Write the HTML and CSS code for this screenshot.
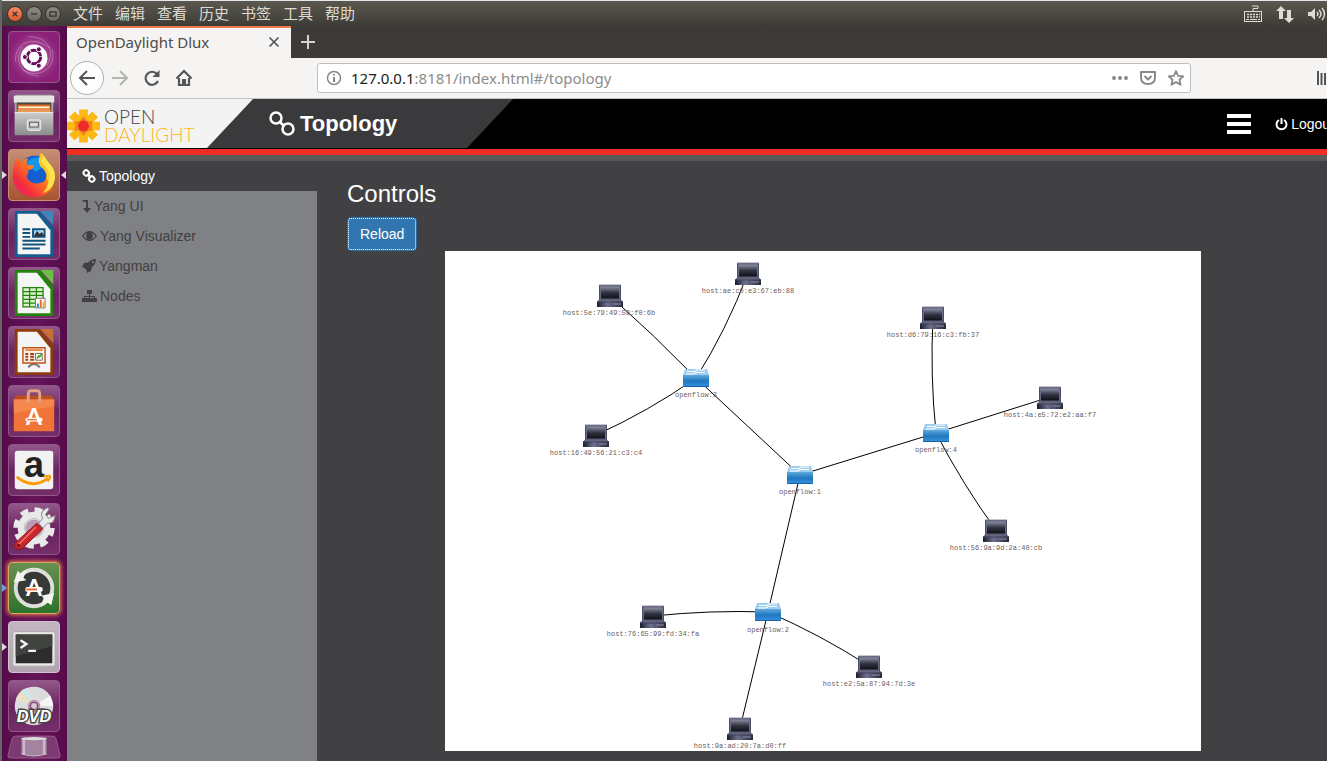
FILE: index.html
```html
<!DOCTYPE html>
<html lang="zh-CN">
<head>
<meta charset="utf-8">
<title>OpenDaylight Dlux</title>
<link rel="stylesheet" href="styles.css">
</head>
<body>
<div class="desktop">
  <header class="menubar">
    <div class="window-buttons">
      <button class="win win-close" aria-label="关闭"><svg viewBox="0 0 16 16"><path d="M5.500 5.500l5 5M10.500 5.500l-5 5"/></svg></button>
      <button class="win" aria-label="最小化"><svg viewBox="0 0 16 16"><path d="M4.500 8h7"/></svg></button>
      <button class="win" aria-label="还原"><svg viewBox="0 0 16 16"><path d="M4.500 5.500h7v5h-7z"/></svg></button>
    </div>
    <nav class="menus">
      <button>文件</button><button>编辑</button><button>查看</button><button>历史</button><button>书签</button><button>工具</button><button>帮助</button>
    </nav>
    <div class="indicators">
      <svg width="20" height="20" viewBox="0 0 20 20" fill="none" stroke="#dfdbd2"><rect x="1.500" y="7.500" width="17" height="10"/><path d="M10 7V4.500h5V2H9"/><path d="M4 10.500h13M4 13h13" stroke-width="1.500" stroke-dasharray="2 1"/><path d="M3 15.500h3M7 15.500h7M15 15.500h2"/></svg>
      <svg width="20" height="20" viewBox="0 0 20 20" fill="#dfdbd2"><path d="M6 2l5 5H8v8H4V7H1zM14 19l-5-5h3V6h4v8h3z"/></svg>
      <svg width="20" height="20" viewBox="0 0 20 20" fill="none" stroke="#dfdbd2" stroke-width="1.500"><path d="M1 8h3l4-4v12l-4-4H1z" fill="#dfdbd2" stroke="none"/><path d="M10 8q2 2 0 4M12 6q4 4 0 8M15 4q5 6 0 12"/></svg>
    </div>
  </header>

  <div class="workspace">
    <nav class="launcher" aria-label="启动器">
      <button class="tile tile-dash" aria-label="Dash"><svg viewBox="0 0 52 52"><g fill="none" stroke="#fff" opacity=".3"><path d="M7 31C5 10 26 3 43 17M20 5c20-1 29 15 19 30M45 18c5 20-15 32-31 21M31 46C14 45 4 30 14 15"/></g><circle cx="26" cy="27" r="14" fill="#fff"/><circle cx="26" cy="26" r="7" fill="none" stroke="#650d59" stroke-width="3" stroke-dasharray="13.600 1.060"/><g fill="#650d59" stroke="#fff"><circle cx="16.500" cy="26" r="2.600"/><circle cx="31" cy="18" r="2.600"/><circle cx="31" cy="35" r="2.600"/></g></svg></button>
      <button class="tile" aria-label="文件"><svg viewBox="0 0 52 52"><path d="M6 6q0-2 2-2h36q2 0 2 2v38H6z" fill="#aaa"/><path d="M5 5h42v7H5z" fill="#e5e5e3"/><path d="M8 12h36v12H8z" fill="#494946"/><path d="M9 14h34v8H9z" fill="#da6d27"/><path d="M10 16h32v2H10z" fill="#fff0cc"/><path d="M9 19h34v3H9z" fill="#eb9a59"/><path d="M6 22h40v24H6z" fill="url(#metal)"/><path d="M6 22.500h40" stroke="#eee"/><rect x="19" y="30" width="14" height="11" rx="2" fill="#c8c8c8" stroke="#eee"/><rect x="21.500" y="32.500" width="9" height="5" fill="#ddd" stroke="#555"/></svg></button>
      <button class="tile tile-firefox pinned focused" aria-label="Firefox"><svg viewBox="0 0 52 52"><circle cx="27" cy="25" r="19" fill="#155ed0"/><path d="M17 14q7-8 17-6l-3 4 5 5-8 6z" fill="#1796e8"/><path d="M5 18c1-4 1-7 3-10l4 5q5-5 8-4-3 4-1 7 3-1 7 0-1 4-6 5v3q-4 4 1 8 6 5 15 1 5-4 3-13-1-5-6-8l-1-9q7 5 7 12 7 6 8 16c0 11-9 18-20 18C12 49 3 38 4 25z" fill="url(#fire)"/><path d="M34 3q5 7 10 13 6 8 3 17-3 9-12 12 6-6 6-14 0-10-6-16-5-4-1-12z" fill="#ffe348"/><path d="M34 5q-4 8 2 13 6 6 4 13" fill="none" stroke="#ffc52a" stroke-width="3"/></svg></button>
      <button class="tile" aria-label="LibreOffice Writer"><svg viewBox="0 0 52 52"><path d="M7 2h25l14 17v29q0 2-2 2H8q-2 0-2-2V4q0-2 1-2z" fill="#135e91"/><path d="M9 5h20l14 17v25H9z" fill="#f5f5f5"/><path d="M33 2h13v15z" fill="#3f87ba"/><path d="M14 21h8M14 25h8M14 29h8M14 33h24M14 37h24M14 41h18" stroke="#10527f" stroke-width="2"/><path d="M25 21h12v8H25z" fill="#a6d6f3" stroke="#10527f" stroke-width="2"/><path d="M26 28l3-5 3 3 2-2 3 4z" fill="#333"/><circle cx="34" cy="23" r="1" fill="#ee4"/></svg></button>
      <button class="tile" aria-label="LibreOffice Calc"><svg viewBox="0 0 52 52"><path d="M7 2h25l14 17v29q0 2-2 2H8q-2 0-2-2V4q0-2 1-2z" fill="#24830d"/><path d="M9 5h20l14 17v25H9z" fill="#f5f5f5"/><path d="M33 2h13v15z" fill="#6cc047"/><path d="M14.500 20.500h21v20h-21zM14 24.500h22M14 28.500h22M14 32.500h22M14 36.500h22M21.500 20v21M28.500 20v21" fill="#d9f0cd" stroke="#24830d" stroke-width="1.300"/><path d="M27.500 31.500h10v10h-10z" fill="#fff" stroke="#777"/><path d="M29 37h2v4h-2z" fill="#1688d6"/><path d="M32 33h2v8h-2z" fill="#ee6a20"/><path d="M35 35h2v6h-2z" fill="#f0b321"/></svg></button>
      <button class="tile" aria-label="LibreOffice Impress"><svg viewBox="0 0 52 52"><path d="M7 2h25l14 17v29q0 2-2 2H8q-2 0-2-2V4q0-2 1-2z" fill="#8e3b0b"/><path d="M9 5h20l14 17v25H9z" fill="#f5f5f5"/><path d="M33 2h13v15z" fill="#c57137"/><path d="M26 38v-3M20 42q6-7 12 0" stroke="#777" stroke-width="2" fill="none"/><path d="M14.500 21.500h23v16h-23z" fill="#fff4e9" stroke="#c45217" stroke-width="1.500"/><path d="M17 24h18" stroke="#e98a4d" stroke-width="2"/><path d="M17 28h3M17 31h3M17 34h3M22 28h4M22 31h4M22 34h4" stroke="#a44319" stroke-width="2"/><path d="M27.500 27.500h7v7h-7z" fill="#fff" stroke="#666"/><path d="M29 33l2-3 1 1 2-3" fill="none" stroke="#34a01e" stroke-width="1.500"/></svg></button>
      <button class="tile" aria-label="Ubuntu 软件"><svg viewBox="0 0 52 52"><path d="M7 10h38l2 5H5z" fill="#b94e22"/><path d="M5 14h42v33H5z" fill="#f07437"/><path d="M5 14h42v7L5 28z" fill="#f5874e"/><path d="M20 17V9q0-4 3-4h6q3 0 3 4v8" fill="none" stroke="#e5a184" stroke-width="3"/><text x="26" y="41" class="glyph glyph-app">A</text><rect x="17" y="33" width="18" height="4" rx="2" fill="#fff"/><path d="M19 35h10" stroke="#f07437" stroke-width="1.500"/></svg></button>
      <button class="tile" aria-label="Amazon"><svg viewBox="0 0 52 52"><rect x="6" y="6" width="40" height="40" rx="3" fill="#f2f2f2"/><text x="26" y="33" class="glyph glyph-amazon">a</text><path d="M9 34q16 12 31 1" fill="none" stroke="#f90" stroke-width="3" stroke-linecap="round"/><path d="M36 33q7-2 7 0t-3 5" fill="none" stroke="#f90" stroke-width="2"/></svg></button>
      <button class="tile" aria-label="系统设置"><svg viewBox="0 0 52 52"><circle cx="26" cy="25" r="18.500" fill="none" stroke="#e9e9e9" stroke-width="6" stroke-dasharray="8 6.530"/><circle cx="26" cy="25" r="13" fill="#b99bb5" stroke="#e9e9e9" stroke-width="8"/><circle cx="26" cy="25" r="10" fill="none" stroke="#bbb"/><path d="M31 20l4-5q-4-7 5-11l2 1-4 6 3 4 7-3q-1 9-8 8l-5 5z" fill="#e8eaeb" stroke="#888"/><path d="M29 20l6 6L14 46q-5 3-8-2-1-3 1-4z" fill="#c9272b" stroke="#8e1518"/><path d="M28 24L10 42" stroke="#eb6965" stroke-width="2"/><circle cx="10" cy="43" r="1.500" fill="#631014"/></svg></button>
      <button class="tile tile-updater pinned-outline" aria-label="软件更新器"><svg viewBox="0 0 52 52"><circle cx="26" cy="26" r="18" fill="#373936"/><circle cx="26" cy="26" r="19" fill="none" stroke="#dededb" stroke-width="4"/><path d="M5 20L9 8l3 3 7-4-4 8 3 3zM47 31l-3 13-4-3-7 3 3-7-2-3z" fill="#f3f3f0"/><text x="26" y="34" class="glyph glyph-app">A</text><rect x="17" y="25" width="18" height="5" rx="2" fill="#fff"/><path d="M18 27.500h11" stroke="#eb682e" stroke-width="2"/></svg></button>
      <button class="tile tile-terminal pinned" aria-label="终端"><svg viewBox="0 0 52 52"><rect x="4" y="10" width="44" height="36" rx="2" fill="#e6e6e3" stroke="#aaa"/><path d="M7 13h38v30H7z" fill="#2c2d2c"/><path d="M7 13h38v12L7 36z" fill="#414341"/><path d="M12 19l6 4-6 4M20 30h8" fill="none" stroke="#f3f3f3" stroke-width="2.500"/></svg></button>
      <button class="tile" aria-label="DVD"><svg viewBox="0 0 52 52"><circle cx="26" cy="26" r="20" fill="#dcdcdf"/><path d="M26 26L7 19q3-8 9-11z" fill="#e9e0c5"/><path d="M26 26L13 10l6-3z" fill="#c9e9e4"/><path d="M26 26l17-11 3 11z" fill="#f5f5f5"/><circle cx="26" cy="26" r="5.500" fill="#854879" stroke="#b796b0" stroke-width="2"/><circle cx="26" cy="26" r="3" fill="#d9c9d5"/><text x="26" y="43" class="glyph glyph-dvd">DVD</text></svg></button>
      <button class="tile-folded" aria-label="设备"><svg viewBox="0 0 64 27"><path d="M10 0h44q3 0 4 3l5 20q0 3-3 3H4q-3 0-3-3L6 3q1-3 4-3z" fill="#7b3a70" stroke="#9b6592"/><path d="M17 2v19q15 5 30 0V2z" fill="#a483a0"/><path d="M20 4v18M44 4v18" stroke="#cbb8c9" stroke-width="3"/><ellipse cx="32" cy="3" rx="15" ry="2" fill="#ddd"/><path d="M17 21q15 5 30 0" fill="none" stroke="#d3c7d2"/></svg></button>
    </nav>

    <div class="browser">
      <div class="tabs">
        <div class="tab"><span>OpenDaylight Dlux</span><button aria-label="关闭标签页"><svg width="12" height="12" viewBox="0 0 12 12"><path d="M1.500 1.500l9 9M10.500 1.500l-9 9" stroke="#555" stroke-width="1.700"/></svg></button></div>
        <button class="new-tab" aria-label="新标签页"><svg width="14" height="14" viewBox="0 0 14 14"><path d="M7 0v14M0 7h14" stroke="#d5d3cd" stroke-width="2"/></svg></button>
      </div>
      <div class="toolbar">
        <button class="back" aria-label="后退"><svg viewBox="0 0 18 18"><path d="M17 9H2M9 2L2 9l7 7"/></svg></button>
        <button class="tool tool-off" aria-label="前进"><svg viewBox="0 0 18 18"><path d="M1 9h15M9 2l7 7-7 7"/></svg></button>
        <button class="tool" aria-label="重新载入"><svg viewBox="0 0 18 18"><path d="M15 12a6.500 6.500 0 1 1-1-7" stroke-width="2.200"/><path d="M16.500 1v7h-7z" fill="#555" stroke="none"/></svg></button>
        <button class="tool" aria-label="主页"><svg viewBox="0 0 18 18"><path d="M1.500 9.500L9 2l7.500 7.500M4 9v7h10V9" stroke-width="2.200"/><path d="M7 10h4v6H7z" fill="#555" stroke="none"/></svg></button>
        <div class="address">
          <svg viewBox="0 0 18 18" class="muted"><circle cx="9" cy="9" r="6.500"/><path d="M9 8v5M9 5v1.500" stroke-width="2"/></svg>
          <label class="url"><input type="text" aria-label="地址" value="127.0.0.1:8181/index.html#/topology"><span aria-hidden="true"><b>127.0.0.1</b>:8181/index.html#/topology</span></label>
          <button aria-label="更多"><svg viewBox="0 0 18 18" class="muted"><g fill="#888" stroke="none"><circle cx="3" cy="9" r="2"/><circle cx="9" cy="9" r="2"/><circle cx="15" cy="9" r="2"/></g></svg></button>
          <button aria-label="Pocket"><svg viewBox="0 0 18 18" class="muted"><path d="M2 3h14v5q0 7-7 7T2 8zM5.500 7L9 10.500 12.500 7" stroke-width="2" stroke-linejoin="round"/></svg></button>
          <button aria-label="收藏"><svg viewBox="0 0 18 18" class="muted"><path d="M9 2l2.100 4.800 5.200.5-3.900 3.400 1.200 5.100L9 13.100l-4.600 2.700 1.200-5.100-3.900-3.400 5.200-.5z" stroke-width="1.800" stroke-linejoin="round"/></svg></button>
        </div>
        <button class="tool library" aria-label="书架"><svg viewBox="0 0 18 18"><path d="M2 2v14M5.500 4v12M9 4v12M12 4l4 12"/></svg></button>
      </div>

      <div class="page">
        <header class="banner">
          <div class="band">
            <a class="brand" href="#"><svg width="33" height="34" viewBox="0 0 34 34"><g fill="#fdb813"><path d="M12.500 0h9v34h-9z"/><path d="M0 12.500h34v9H0z"/><path d="M2 8l6-6 24 24-6 6z"/><path d="M26 2l6 6L8 32l-6-6z"/></g><path d="M17 7l4.500 5h5l-1 5 1 5h-5L17 27l-4.500-5h-5l1-5-1-5h5z" fill="#f58220"/><path d="M17 11l4 2 2 4-2 4-4 2-4-2-2-4 2-4z" fill="#ee2d24"/></svg><span class="brand-name"><span>OPEN</span><span class="gold">DAYLIGHT</span></span></a>
            <h1><svg width="26" height="26" viewBox="0 0 26 26" fill="none" stroke="#fff" stroke-width="2.500"><circle cx="7" cy="7" r="5.500"/><circle cx="19" cy="18" r="5.500"/><path d="M11 11l4 4"/></svg>Topology</h1>
          </div>
          <div class="account">
            <button class="burger" aria-label="Menu"><i></i><i></i><i></i></button>
            <a href="#"><svg width="13" height="14" viewBox="0 0 13 14" fill="none" stroke="#fff" stroke-width="2"><path d="M4 3a5 5 0 1 0 5 0M6.500 1v6"/></svg>Logout</a>
          </div>
        </header>
        <div class="columns">
          <nav class="sidebar">
            <a class="active" href="#"><svg width="14" height="14" viewBox="0 0 14 14" class="line"><rect x="1.500" y="1.500" width="5.500" height="5" rx="2.300" transform="rotate(45 4.250 4)"/><rect x="7" y="7.500" width="5.500" height="5" rx="2.300" transform="rotate(45 9.750 10)"/><path d="M5 5l4 4"/></svg>Topology</a>
            <a href="#"><svg width="9" height="14" viewBox="0 0 9 14"><path d="M0 1h6v8h3l-4 5-4-5h3V3H2z"/></svg>Yang UI</a>
            <a href="#"><svg width="15" height="14" viewBox="0 0 15 14"><path fill-rule="evenodd" d="M0 7q7.500-10 15 0-7.500 10-15 0zm1.500 0q6 7.500 12 0-2-2.500-4-3 2 2 1 5-1 2-3 2t-3-2q-1-3 1-5-2 .5-4 3z"/><circle cx="7.500" cy="6.500" r="2.500"/></svg>Yang Visualizer</a>
            <a href="#"><svg width="14" height="14" viewBox="0 0 14 14"><path fill-rule="evenodd" d="M14 0q0 5-4 8l-1 4-4 2-.5-3-2-2L0 8l2-4 4-.5Q9 0 14 0zm-3 2a1 1 0 1 0 .1 0z"/></svg>Yangman</a>
            <a href="#"><svg width="15" height="14" viewBox="0 0 15 14"><path d="M5 1h5v4H8v2h5v2h2v4h-5V9h2V8H8v1h2v4H5V9h2V8H3v1h2v4H0V9h2V7h5V5H5z"/></svg>Nodes</a>
          </nav>
          <main class="content">
            <h3>Controls</h3>
            <button class="reload">Reload</button>
            <svg class="graph" viewBox="0 0 756 500" role="img" aria-label="Topology">
              <defs>
                <linearGradient id="metal" x2="0" y2="1"><stop stop-color="#ccc"/><stop offset="1" stop-color="#8c8c8c"/></linearGradient>
                <linearGradient id="fire" x1="1" x2="0" y2="1"><stop stop-color="#ffd83a"/><stop offset=".45" stop-color="#ff7a20"/><stop offset=".75" stop-color="#f5293f"/><stop offset="1" stop-color="#e42486"/></linearGradient>
                <linearGradient id="screen" x2="0" y2="1"><stop stop-color="#8d90a5"/><stop offset=".5" stop-color="#30323f"/><stop offset="1" stop-color="#0d0e15"/></linearGradient>
                <linearGradient id="base" x2="1"><stop stop-color="#191a2b"/><stop offset=".4" stop-color="#6e7090"/><stop offset="1" stop-color="#272839"/></linearGradient>
                <linearGradient id="front" x2="0" y2="1"><stop stop-color="#62a9dc"/><stop offset=".5" stop-color="#1e78bf"/><stop offset="1" stop-color="#3a92dd"/></linearGradient>
                <symbol id="host" viewBox="0 0 26 23"><path d="M2 1h22v15H2z" fill="#4b4d6b"/><path d="M2 1h22" stroke="#8b8da3"/><path d="M3.500 2.500h19v12.500h-19z" fill="url(#screen)" stroke="#74768f" stroke-width=".8"/><path d="M1.500 16h23l1.500 2H0z" fill="#65677f"/><path d="M0 17.500h26V23H0z" fill="url(#base)"/><path d="M16 20h8" stroke="#8d90a5"/><path d="M0 18h26" stroke="#434561"/></symbol>
                <symbol id="switch" viewBox="0 0 26 18"><path d="M2 0h22l2 6H0z" fill="#9dcef0"/><path d="M0 6h26v12H0z" fill="url(#front)"/><path d="M0 17.500h26" stroke="#1765a8"/><path d="M4 2.500h8l2-1.500h8M3 5h8l2-1.500h9" fill="none" stroke="#fff" stroke-width="1.200"/></symbol>
              </defs>
              <g class="links">
                <path d="M164 44Q209 84 251 127"/><path d="M303 22Q281 80 251 127"/><path d="M151 184Q204 160 251 127"/><path d="M251 127L355 224"/><path d="M355 224L491 182"/><path d="M491 182Q485 124 488 66"/><path d="M491 182L605 146"/><path d="M491 182Q518 234 551 279"/><path d="M355 224L323 361"/><path d="M323 361Q265 359 208 365"/><path d="M323 361Q376 384 424 415"/><path d="M323 361L295 477"/>
              </g>
              <g class="nodes">
                <use href="#host" x="152" y="33" width="26" height="23"/><text x="164" y="64">host:5e:79:49:59:f0:6b</text>
                <use href="#host" x="290" y="11" width="26" height="23"/><text x="303" y="42">host:ae:c0:e3:67:eb:88</text>
                <use href="#host" x="138" y="173" width="26" height="23"/><text x="151" y="204">host:16:49:56:21:c3:c4</text>
                <use href="#host" x="475" y="55" width="26" height="23"/><text x="488" y="86">host:d6:79:16:c3:fb:37</text>
                <use href="#host" x="592" y="135" width="26" height="23"/><text x="605" y="166">host:4a:e5:72:e2:aa:f7</text>
                <use href="#host" x="538" y="268" width="26" height="23"/><text x="551" y="299">host:56:9a:9d:2a:40:cb</text>
                <use href="#host" x="195" y="354" width="26" height="23"/><text x="208" y="385">host:76:65:99:fd:34:fa</text>
                <use href="#host" x="411" y="404" width="26" height="23"/><text x="424" y="435">host:e2:5a:87:94:7d:3e</text>
                <use href="#host" x="282" y="466" width="26" height="23"/><text x="295" y="497">host:9a:ad:20:7a:d0:ff</text>
                <use href="#switch" x="238" y="118" width="26" height="18"/><text x="251" y="146">openflow:3</text>
                <use href="#switch" x="342" y="215" width="26" height="18"/><text x="355" y="243">openflow:1</text>
                <use href="#switch" x="478" y="173" width="26" height="18"/><text x="491" y="201">openflow:4</text>
                <use href="#switch" x="310" y="352" width="26" height="18"/><text x="323" y="381">openflow:2</text>
              </g>
            </svg>
          </main>
        </div>
      </div>
    </div>
  </div>
</div>
</body>
</html>
```
FILE: styles.css
```css
* { box-sizing: border-box; }
body { margin: 0; overflow: hidden; font-family: "Liberation Sans", "Noto Sans CJK SC", sans-serif; font-size: 14px; }
button { margin: 0; padding: 0; border: 0; background: none; font: inherit; color: inherit; }
a { color: inherit; text-decoration: none; }
svg { display: block; flex: none; }

.desktop { height: 100vh; display: flex; flex-direction: column; overflow: hidden; border-left: 2px solid #666; background: #3c3b37; }

.menubar { flex: none; height: 26px; border-top: 1px solid #e4e8ea; background: linear-gradient(#5a584e, #3d3c38); display: flex; align-items: center; padding-left: 5px; color: #dfdbd2; }
.window-buttons { display: flex; gap: 3px; }
.win { width: 16px; height: 16px; border-radius: 50%; border: 1px solid #33322e; background: linear-gradient(#8b8980, #6c6a62); }
.win-close { background: linear-gradient(#f58a62, #e0562c); }
.win svg { width: 14px; height: 14px; fill: none; stroke: #38362f; stroke-width: 1.5; }
.menus { display: flex; gap: 12px; margin-left: 12px; padding-bottom: 2px; font: 15px/22px "Noto Sans CJK SC", sans-serif; }
.indicators { display: flex; gap: 12px; margin-left: auto; }

.workspace { flex: 1; min-height: 0; display: flex; }
.launcher { flex: none; width: 65px; padding: 5px 1px 0 0; background: linear-gradient(90deg, #560b4b, #66145a 50%, #560b4b); display: flex; flex-direction: column; align-items: center; gap: 7px; overflow: hidden; }
.tile { position: relative; flex: none; width: 52px; height: 52px; border-radius: 4px; border: 1px solid #92578a; background: linear-gradient(#92588a, #6a235f 50%, #742e69); }
.tile svg { width: 50px; height: 50px; }
.tile-dash { background: radial-gradient(#b969ac, #8c2078 70%); }
.tile-firefox { background: linear-gradient(#c48e75, #a65530); border-color: #c98f73; }
.tile-updater { background: linear-gradient(#689050, #2d722c); border-color: #e3a45f; box-shadow: 0 0 4px 1px #f08148; }
.tile-terminal { background: linear-gradient(#c3b5c1, #b3a3b0); border-color: #cfc3cd; }
.pinned::before, .pinned-outline::before, .focused::after { content: ""; position: absolute; top: 21px; border: 4px solid transparent; }
.pinned::before { left: -7px; border-left: 5px solid #ddd; border-right: 0; }
.pinned-outline::before { left: -7px; border-left: 5px solid #71a0d8; border-right: 0; }
.focused::after { right: -7px; border-right: 5px solid #ddd; border-left: 0; }
.tile-folded { flex: none; margin-top: -5px; }
.tile-folded svg { width: 54px; height: 27px; }
.glyph { text-anchor: middle; font-family: "Liberation Sans", sans-serif; font-weight: bold; }
.glyph-app { font-size: 24px; font-family: Lato, sans-serif; fill: #fff; }
.glyph-amazon { font-size: 38px; fill: #222; }
.glyph-dvd { font-size: 17px; font-style: italic; fill: #fff; stroke: #444; stroke-width: 3px; paint-order: stroke; }

.browser { flex: 1; min-width: 0; display: flex; flex-direction: column; }
.tabs { flex: none; height: 32px; display: flex; background: #3c3b37; }
.tab { width: 224px; border-top: 2px solid #ef7847; background: #f5f4f2; color: #4c4c4c; display: flex; align-items: center; justify-content: space-between; padding: 0 11px 2px 9px; font: 15px/20px "Noto Sans", sans-serif; }
.new-tab { padding: 0 10px; }
.toolbar { flex: none; height: 41px; display: flex; align-items: center; padding: 0 4px 0 3px; background: #f5f4f2; border-bottom: 1px solid #c4c2bf; overflow: hidden; }
.toolbar svg { width: 18px; height: 18px; fill: none; stroke: #555; stroke-width: 2; }
.back { width: 34px; height: 34px; padding: 7px; border: 1px solid #b1b0ae; border-radius: 50%; background: #fdfdfd; flex: none; }
.tool { flex: none; width: 32px; display: flex; justify-content: center; }
.tool-off { opacity: .4; }
.toolbar .address { flex: 1; height: 30px; margin-left: 117px; padding: 0 5px 0 7px; border: 1px solid #c1bfbc; border-radius: 3px; background: #fff; display: flex; align-items: center; gap: 10px; }
.toolbar .muted { stroke: #888; stroke-width: 1.5; }
.address > svg { margin-right: -2px; }
.url { flex: 1; display: grid; font: 15px/20px "Noto Sans", sans-serif; color: #8c8c8c; }
.url > * { grid-area: 1 / 1; }
.url input { border: 0; padding: 0; background: none; font: inherit; color: transparent; outline: 0; }
.url span { pointer-events: none; }
.url b { font-weight: normal; color: #222; }
.library { margin-left: 118px; margin-right: -18px; }

.page { flex: 1; min-height: 0; display: flex; flex-direction: column; background: #414042; }
.banner { flex: none; height: 62px; background: #000; border-bottom: 6px solid #58595b; display: flex; justify-content: space-between; align-items: stretch; box-shadow: inset 0 -6px #ee2d24; padding-bottom: 7px; overflow: hidden; }
.band { width: 446px; background: #3a393b; clip-path: polygon(0 0, 100% 0, calc(100% - 46px) 100%, 0 100%); display: flex; gap: 16px; }
.brand { width: 186px; background: #f3f3f3; clip-path: polygon(0 0, 100% 0, calc(100% - 46px) 100%, 0 100%); display: flex; align-items: center; gap: 4px; padding-top: 4px; }
.brand-name { display: grid; font: 300 19px/18px Lato, sans-serif; color: #444; }
.gold { color: #fdb813; }
h1 { margin: 0; display: flex; align-items: center; gap: 5px; color: #fff; font-size: 22px; line-height: 26px; }
.account { display: flex; align-items: center; gap: 24px; margin-right: -7px; color: #fff; }
.account a { display: flex; align-items: center; gap: 3px; }
.burger { width: 24px; display: grid; gap: 4px; }
.burger i { height: 4px; background: #fff; }

.columns { flex: 1; min-height: 0; display: flex; }
.sidebar { flex: none; width: 250px; background: #808184; color: #414042; }
.sidebar a { height: 30px; padding-left: 15px; display: flex; align-items: center; gap: 3px; }
.sidebar svg { fill: currentColor; }
.sidebar .line { fill: none; stroke: currentColor; stroke-width: 2; }
.sidebar .active { background: #414042; color: #fff; }
.content { flex: 1; min-width: 0; padding: 20px 126px 10px 30px; color: #fff; }
h3 { margin: 0 0 10px; font-weight: normal; font-size: 24px; line-height: 26px; }
.reload { display: block; height: 34px; padding: 6px 12px; border: 1px solid #2e6da4; border-radius: 4px; background: #3276b1; outline: 1px dotted #fff; outline-offset: -2px; line-height: 20px; }
.graph { width: calc(100% - 98px); margin-left: 98px; background: #fff; }
.links { fill: none; stroke: #000; stroke-width: 1; }
.nodes text { font: 7px "Liberation Mono", monospace; fill: #6b5d5d; text-anchor: middle; }
```
